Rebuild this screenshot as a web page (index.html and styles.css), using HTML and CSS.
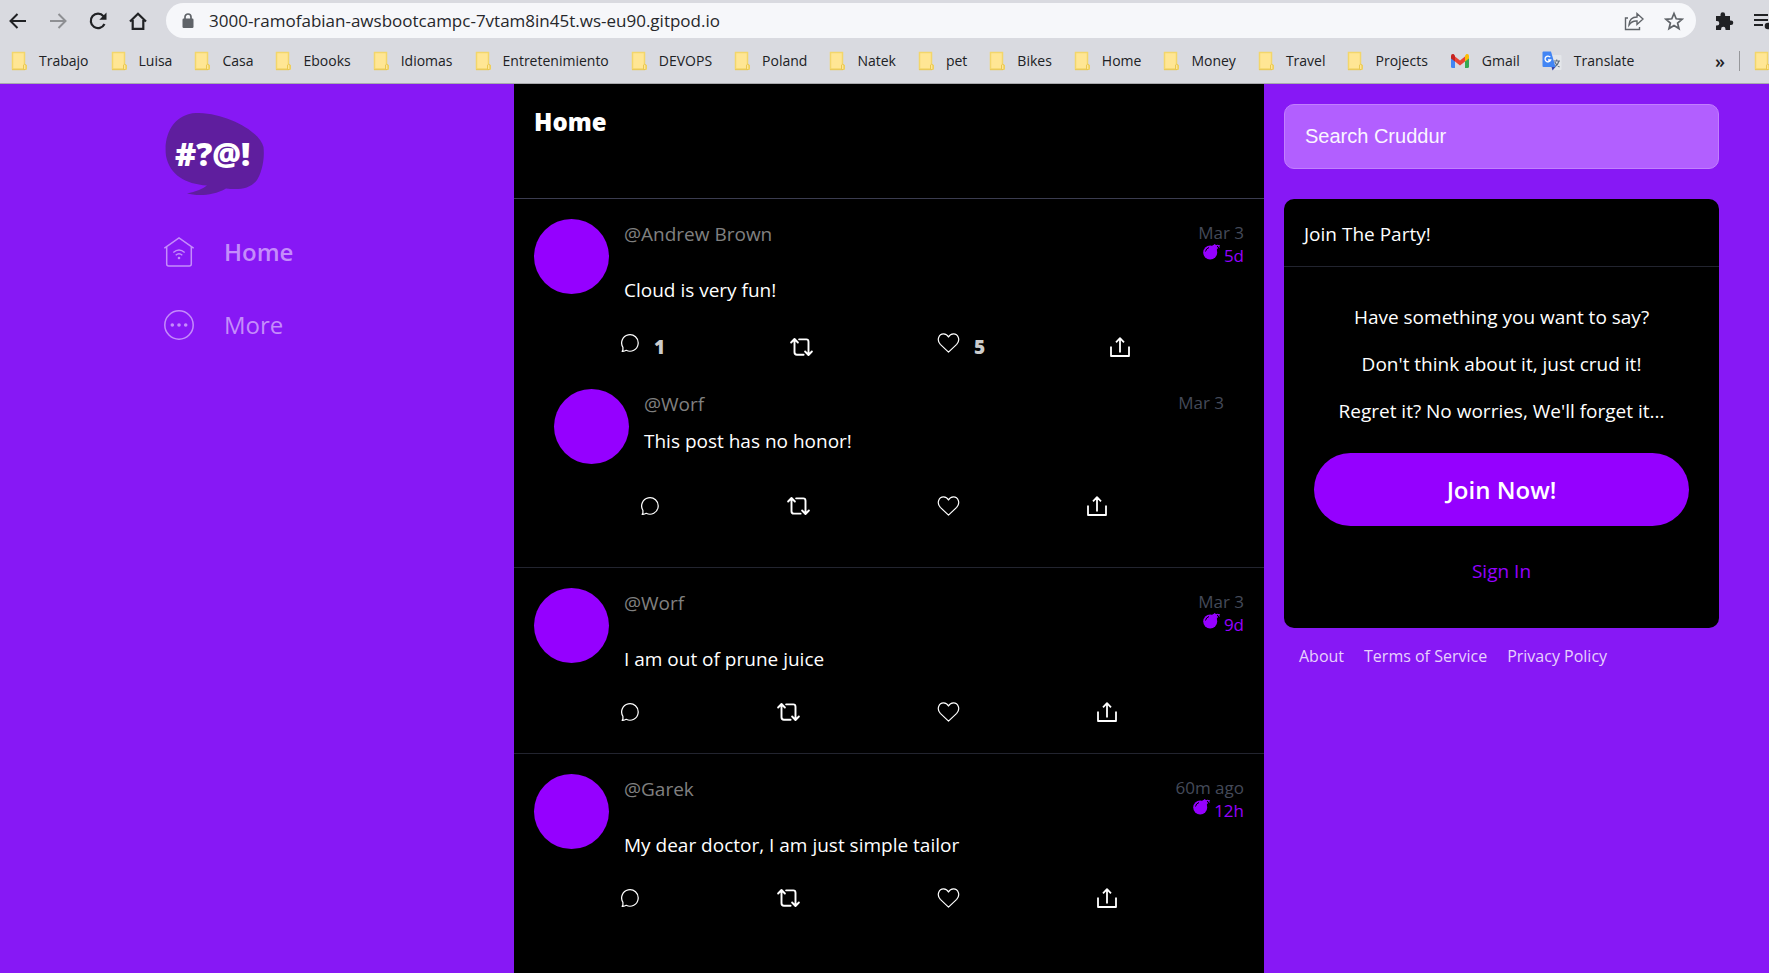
FILE: index.html
```html
<!DOCTYPE html>
<html lang="en">
<head>
<meta charset="utf-8">
<title>Cruddur</title>
<link rel="stylesheet" href="styles.css">
</head>
<body>
<svg class="sprite" aria-hidden="true">
  <symbol id="folder" viewBox="0 0 16 20"><path d="M1.5 1.5h12v13h2v3.500h-14z" fill="#ffe694" stroke="#f3d66b" stroke-width="1.500"/><path d="M12.500 18.500v-4.500q1-1.500 2.500 0v3.500q0 1-1 1z" fill="#ffe694" stroke="#e9c750"/><path d="M1 18.700h13" stroke="#e9c750"/></symbol>
  <symbol id="comment" viewBox="0 0 20 20"><path d="M1.200 18.700l.8-1.200V14.500A8.700 8.700 0 1 1 5.500 17.700q-2 1.300-4.300 1z" fill="none" stroke="currentColor" stroke-width="1.300" stroke-linejoin="round"/></symbol>
  <symbol id="repost" viewBox="0 0 24 20"><path d="M1.200 5.300L4.700 1.600l3.500 3.700M4.700 2v13.500q0 2.500 2.500 2.500h7M9.500 2H17q2.300 0 2.300 2.500V18M15.800 14.700l3.500 3.700 3.500-3.700" fill="none" stroke="currentColor" stroke-width="2" stroke-linecap="round" stroke-linejoin="round"/></symbol>
  <symbol id="heart" viewBox="0 0 24 22"><path d="M12 21L3 12.500C-1.500 7.500 1.500 1 6.500 1c2.500 0 4.500 1.500 5.500 3.500C13 2.500 15 1 17.500 1c5 0 8 6.500 3.500 11.500z" fill="none" stroke="currentColor" stroke-width="1.300" stroke-linejoin="round"/></symbol>
  <symbol id="share" viewBox="0 0 20 20"><path d="M1 9.500V19h18V9.500M10 15.500V1.500M6 5.300l4-4.100 4 4.100" fill="none" stroke="currentColor" stroke-width="1.800" stroke-linejoin="round"/></symbol>
  <symbol id="bomb" viewBox="0 0 18 16"><circle cx="7.200" cy="8.500" r="7" fill="currentColor"/><path d="M8 3l4-2.500 2.500 3.500-2.500 3zM12 2q2.500-1.500 5 0M15 1.500l1.500 2" fill="currentColor" stroke="currentColor"/><path d="M2.500 7.500q.5-3 3.500-4" fill="none" stroke="#000"/></symbol>
</svg>

<header class="browser">
  <div class="toolbar">
    <button class="tool" aria-label="Back"><svg viewBox="0 0 20 20"><path d="M18 10H3M9.500 3L2.500 10l7 7" fill="none" stroke="currentColor" stroke-width="2"/></svg></button>
    <button class="tool tool-off" aria-label="Forward"><svg viewBox="0 0 20 20"><path d="M2 10h15M10.500 3l7 7-7 7" fill="none" stroke="currentColor" stroke-width="2"/></svg></button>
    <button class="tool" aria-label="Reload"><svg viewBox="0 0 20 20"><path d="M16.500 13A7.200 7.200 0 1 1 15.500 5.200" fill="none" stroke="currentColor" stroke-width="2.200"/><path d="M18.500 1.500v7.200h-7.200z" fill="currentColor"/></svg></button>
    <button class="tool" aria-label="Home page"><svg viewBox="0 0 20 20"><path d="M2 10.500L10 2.700l8 7.800M4.700 9v8.800h10.600V9" fill="none" stroke="currentColor" stroke-width="2.200"/></svg></button>
    <div class="address">
      <svg class="lock" viewBox="0 0 12 16"><path d="M3 7V4a3 3 0 0 1 6 0v3" fill="none" stroke="#5f6368" stroke-width="1.700"/><rect x=".5" y="5.500" width="11" height="9.500" rx="1.200" fill="#5f6368"/></svg>
      <input class="url" aria-label="Address" value="3000-ramofabian-awsbootcampc-7vtam8in45t.ws-eu90.gitpod.io">
      <button class="tool tool-gray" aria-label="Share this page"><svg viewBox="0 0 20 20"><path d="M4 7H1.500v11.500h14V16M5 14q.5-8 8-8V2.500L19 8l-6 5.500V10q-5-.5-8 4z" fill="none" stroke="currentColor" stroke-width="1.400"/></svg></button>
      <button class="tool tool-gray" aria-label="Bookmark"><svg viewBox="0 0 20 20"><path d="M10 2.500l2.200 5.300 5.800.5-4.400 3.700 1.400 5.600-5-3-5 3L6.400 12 2 8.300l5.800-.5z" fill="none" stroke="currentColor" stroke-width="1.700"/></svg></button>
    </div>
    <button class="tool" aria-label="Extensions"><svg viewBox="0 0 20 20"><path d="M2 5h4.500V3.500a2.300 2.300 0 0 1 4.600 0V5H16v4.500h1a2.300 2.300 0 0 1 0 4.600h-1V19h-4.500v-1a2.200 2.200 0 0 0-4.400 0v1H2v-4.500h1a2.300 2.300 0 0 0 0-4.600H2z" fill="currentColor"/></svg></button>
    <button class="tool tool-edge" aria-label="Media"><svg viewBox="0 0 20 20"><path d="M0 4h14M0 9h14M0 14h9M17 4v11" stroke="currentColor" stroke-width="2.200"/><circle cx="14" cy="15" r="3.300" fill="currentColor"/></svg></button>
  </div>
  <nav class="bookmarks" aria-label="Bookmarks">
    <a href="#"><svg class="folder"><use href="#folder"/></svg>Trabajo</a>
    <a href="#"><svg class="folder"><use href="#folder"/></svg>Luisa</a>
    <a href="#"><svg class="folder"><use href="#folder"/></svg>Casa</a>
    <a href="#"><svg class="folder"><use href="#folder"/></svg>Ebooks</a>
    <a href="#"><svg class="folder"><use href="#folder"/></svg>Idiomas</a>
    <a href="#"><svg class="folder"><use href="#folder"/></svg>Entretenimiento</a>
    <a href="#"><svg class="folder"><use href="#folder"/></svg>DEVOPS</a>
    <a href="#"><svg class="folder"><use href="#folder"/></svg>Poland</a>
    <a href="#"><svg class="folder"><use href="#folder"/></svg>Natek</a>
    <a href="#"><svg class="folder"><use href="#folder"/></svg>pet</a>
    <a href="#"><svg class="folder"><use href="#folder"/></svg>Bikes</a>
    <a href="#"><svg class="folder"><use href="#folder"/></svg>Home</a>
    <a href="#"><svg class="folder"><use href="#folder"/></svg>Money</a>
    <a href="#"><svg class="folder"><use href="#folder"/></svg>Travel</a>
    <a href="#"><svg class="folder"><use href="#folder"/></svg>Projects</a>
    <a href="#"><svg class="site" viewBox="0 0 20 16"><path d="M1 3v10.500Q1 15 2.500 15H5V6z" fill="#4285f4"/><path d="M19 3v10.500Q19 15 17.500 15H15V6z" fill="#34a853"/><path d="M5 3.500l5 4 5-4v5l-5 4-5-4z" fill="#ea4335"/><path d="M1 3q0-2.500 2.500-2L5 2.500v6L1 5.500z" fill="#c5221f"/><path d="M19 3q0-2.500-2.500-2L15 2.500v6l4-3z" fill="#fbbc04"/></svg>Gmail</a>
    <a href="#"><svg class="site" viewBox="0 0 20 20"><path d="M8 4h10.500q1 0 1 1v13q0 1-1 1H11z" fill="#e4e6ea"/><path d="M11.500 10h6.500M14.700 8.500V10M17 10q-1 4-4.500 6M12.800 11q1.500 3.500 4.700 5" fill="none" stroke="#5f6f80" stroke-width="1.200"/><path d="M1.500.5H9l4.500 15.500h-12Q.5 16 .5 15V1.500q0-1 1-1z" fill="#4285f4"/><path d="M9.500 16h4l-3 3.500z" fill="#3949ab"/><path d="M8.300 6.200A2.900 2.900 0 1 0 8.700 9H6" fill="none" stroke="#fff" stroke-width="1.300"/></svg>Translate</a>
    <button class="more-marks" aria-label="More bookmarks">»</button>
    <a class="other" href="#" aria-label="Other bookmarks"><svg class="folder"><use href="#folder"/></svg></a>
  </nav>
</header>

<div class="app">
  <aside class="side">
    <nav class="menu">
      <svg class="logo" viewBox="0 0 99 83" role="img" aria-label="Cruddur"><path d="M34 0C64 1 95 19 98.500 34C100 48 96 61 92 67C85 76 74 77 61 75.500C48 83 32 83 22 80.500Q35 78 42 72.500C20 71 5 62 1 43C-2 18 12-1 34 0z" fill="#5f1e9e"/><text class="logo-text" x="10" y="53">#?@!</text></svg>
      <a class="menu-item menu-item-active" href="#"><svg viewBox="0 0 30 30"><path d="M.8 10.800L15 1l14.200 9.800M2.700 10v17q0 2 2 2h20.600q2 0 2-2V10" fill="none" stroke="currentColor" stroke-width="1.500" stroke-linecap="round"/><path d="M9.300 15.500q5.700-5 11.400 0M11.700 18.300q3.300-3 6.600 0" fill="none" stroke="currentColor" stroke-width="1.400"/><circle cx="15" cy="21" r="1.300" fill="currentColor"/></svg>Home</a>
      <a class="menu-item" href="#"><svg viewBox="0 0 30 30"><circle cx="15" cy="15" r="14.200" fill="none" stroke="currentColor" stroke-width="1.500"/><circle cx="8.300" cy="15" r="1.800" fill="currentColor"/><circle cx="15" cy="15" r="1.800" fill="currentColor"/><circle cx="21.700" cy="15" r="1.800" fill="currentColor"/></svg>More</a>
    </nav>
  </aside>

  <main class="feed">
    <h1 class="feed-title">Home</h1>

    <article class="post">
      <div class="post-head">
        <div class="avatar"></div>
        <div class="post-text"><a class="handle" href="#">@Andrew Brown</a><p class="message">Cloud is very fun!</p></div>
        <div class="times"><time>Mar 3</time><span class="expires"><svg><use href="#bomb"/></svg>5d</span></div>
      </div>
      <div class="actions">
        <button class="action" aria-label="Reply"><svg class="i-comment"><use href="#comment"/></svg><span class="count">1</span></button>
        <button class="action" aria-label="Repost"><svg class="i-repost"><use href="#repost"/></svg></button>
        <button class="action" aria-label="Like"><svg class="i-heart"><use href="#heart"/></svg><span class="count">5</span></button>
        <button class="action" aria-label="Share"><svg class="i-share"><use href="#share"/></svg></button>
      </div>
      <article class="reply">
        <div class="post-head">
          <div class="avatar"></div>
          <div class="post-text"><a class="handle" href="#">@Worf</a><p class="message">This post has no honor!</p></div>
          <div class="times"><time>Mar 3</time></div>
        </div>
        <div class="actions">
          <button class="action" aria-label="Reply"><svg class="i-comment"><use href="#comment"/></svg></button>
          <button class="action" aria-label="Repost"><svg class="i-repost"><use href="#repost"/></svg></button>
          <button class="action" aria-label="Like"><svg class="i-heart"><use href="#heart"/></svg></button>
          <button class="action" aria-label="Share"><svg class="i-share"><use href="#share"/></svg></button>
        </div>
      </article>
    </article>

    <article class="post">
      <div class="post-head">
        <div class="avatar"></div>
        <div class="post-text"><a class="handle" href="#">@Worf</a><p class="message">I am out of prune juice</p></div>
        <div class="times"><time>Mar 3</time><span class="expires"><svg><use href="#bomb"/></svg>9d</span></div>
      </div>
      <div class="actions">
        <button class="action" aria-label="Reply"><svg class="i-comment"><use href="#comment"/></svg></button>
        <button class="action" aria-label="Repost"><svg class="i-repost"><use href="#repost"/></svg></button>
        <button class="action" aria-label="Like"><svg class="i-heart"><use href="#heart"/></svg></button>
        <button class="action" aria-label="Share"><svg class="i-share"><use href="#share"/></svg></button>
      </div>
    </article>

    <article class="post">
      <div class="post-head">
        <div class="avatar"></div>
        <div class="post-text"><a class="handle" href="#">@Garek</a><p class="message">My dear doctor, I am just simple tailor</p></div>
        <div class="times"><time>60m ago</time><span class="expires"><svg><use href="#bomb"/></svg>12h</span></div>
      </div>
      <div class="actions">
        <button class="action" aria-label="Reply"><svg class="i-comment"><use href="#comment"/></svg></button>
        <button class="action" aria-label="Repost"><svg class="i-repost"><use href="#repost"/></svg></button>
        <button class="action" aria-label="Like"><svg class="i-heart"><use href="#heart"/></svg></button>
        <button class="action" aria-label="Share"><svg class="i-share"><use href="#share"/></svg></button>
      </div>
    </article>
  </main>

  <aside class="extras">
    <input class="search" type="text" aria-label="Search Cruddur" placeholder="Search Cruddur">
    <section class="join">
      <h2 class="join-title">Join The Party!</h2>
      <div class="join-body">
        <p>Have something you want to say?</p>
        <p>Don't think about it, just crud it!</p>
        <p>Regret it? No worries, We'll forget it...</p>
        <button class="join-button">Join Now!</button>
        <a class="sign-in" href="#">Sign In</a>
      </div>
    </section>
    <footer class="links"><a href="#">About</a><a href="#">Terms of Service</a><a href="#">Privacy Policy</a></footer>
  </aside>
</div>
</body>
</html>
```
FILE: styles.css
```css
* { box-sizing: border-box; }
html, body { height: 100%; }
body {
  display: flex;
  flex-direction: column;
  margin: 0;
  overflow: hidden;
  background: #8718f5;
  color: #fff;
  font-family: "Open Sans", "Noto Sans", sans-serif;
  font-size: 19px;
}
a { color: inherit; text-decoration: none; }
button { padding: 0; border: 0; background: none; color: inherit; font: inherit; }
p, h1, h2 { margin: 0; }
svg { display: block; flex: none; }
.sprite { position: absolute; width: 0; height: 0; }

/* Browser bar */
.browser { flex: none; background: #d9dae0; border-bottom: 1px solid #a9aaae; color: #202124; }
.toolbar { display: flex; align-items: center; gap: 20px; padding: 3px 0 0 8px; overflow: hidden; }
.tool { flex: none; color: #202124; }
.tool svg { width: 20px; height: 20px; }
.tool-off { color: #8e8f93; }
.tool-gray { color: #5f6368; }
.address {
  display: flex;
  flex: 1;
  align-items: center;
  gap: 20px;
  height: 35px;
  margin-left: -2px;
  margin-right: -2px;
  padding: 0 12px 0 16px;
  border-radius: 18px;
  background: #f6f7fa;
}
.lock { width: 12px; height: 16px; }
.url {
  flex: 1;
  min-width: 0;
  margin-left: -5px;
  padding: 0;
  border: 0;
  background: none;
  color: #26272b;
  font: 17px/24px "Open Sans", sans-serif;
}
.tool-edge { margin-right: -5px; }
.bookmarks {
  display: flex;
  align-items: center;
  gap: 22px;
  height: 45px;
  padding-left: 11px;
  overflow: hidden;
  font-size: 14px;
  line-height: 20px;
}
.bookmarks a { display: flex; flex: none; align-items: center; gap: 12px; }
.folder { width: 16px; height: 20px; }
.site { width: 20px; height: 20px; }
.more-marks { margin-left: auto; font-size: 18px; font-weight: 600; line-height: 20px; }
.bookmarks .other { width: 30px; margin-left: -8px; padding-left: 14px; border-left: 1px solid #96979b; }

/* Page */
.app { display: grid; flex: 1; grid-template-columns: minmax(0, 514fr) 750px minmax(0, 505fr); min-height: 0; }
.side { display: flex; justify-content: flex-end; padding-top: 29px; }
.menu { width: 350px; }
.logo { width: 99px; height: 83px; margin: 0 0 19px 1px; }
.logo-text { fill: #fff; font: 800 32px "Open Sans", sans-serif; }
.menu-item {
  display: flex;
  align-items: center;
  gap: 30px;
  height: 73px;
  color: #c58cfb;
  font-size: 24px;
  line-height: 32px;
}
.menu-item svg { width: 30px; height: 30px; }
.menu-item-active { font-weight: 600; }

/* Feed */
.feed { overflow: hidden; background: #000; }
.feed-title {
  height: 115px;
  padding: 22px 20px;
  border-bottom: 1px solid #3b3c50;
  font-size: 24px;
  font-weight: 800;
  line-height: 32px;
}
.post { padding: 20px 20px 21px; border-bottom: 1px solid #22242f; }
.post:last-child { border-bottom: 0; }
.post-head { display: flex; align-items: flex-start; gap: 15px; }
.avatar { flex: none; width: 75px; height: 75px; border-radius: 50%; background: #9500ff; }
.post-text { flex: 1; }
.handle { display: block; color: #808080; line-height: 30px; }
.message { margin: 28px 0 20px; line-height: 26px; }
.times { padding-top: 2px; color: #444a59; font-size: 17px; line-height: 23px; text-align: right; }
.times time { display: block; }
.expires { display: flex; justify-content: flex-end; gap: 3px; color: #9500ff; }
.expires svg { width: 18px; height: 16px; }
.actions { display: flex; align-items: center; padding-left: 77px; }
.action { display: flex; flex: 1 1 auto; align-items: flex-start; gap: 14px; padding: 10px; color: #fff; }
.action svg { height: 20px; }
.i-comment { width: 19px; }
.i-repost, .i-heart { width: 23px; }
.i-share { width: 20px; }
.count { color: #ccc; font-size: 19px; font-weight: 800; line-height: 28px; }
.reply { padding: 18px 20px 20px; }
.reply .message { margin: 9px 0 32px; }

/* Right column */
.extras { padding: 20px 50px 20px 20px; }
.search {
  display: block;
  width: 100%;
  height: 65px;
  padding: 0 20px;
  border: 1px solid #c27ffd;
  border-radius: 10px;
  background: #b25fff;
  color: #fff;
  font: 20px "Liberation Sans", sans-serif;
}
.search::placeholder { color: #fbf5ff; opacity: 1; }
.join { margin-top: 30px; border-radius: 10px; background: #000; }
.join-title { padding: 22px 20px 18px; border-bottom: 1px solid #22242f; font-size: 19px; font-weight: 400; line-height: 27px; }
.join-body { display: flex; flex-direction: column; align-items: center; gap: 20px; padding: 37px 30px 43px; line-height: 27px; }
.join-button {
  align-self: stretch;
  margin: 8px 0;
  padding: 20px;
  border-radius: 37px;
  background: #9500ff;
  color: #fff;
  font-size: 24px;
  font-weight: 600;
  line-height: 33px;
}
.sign-in { margin-top: 4px; color: #9500ff; }
.links { display: flex; gap: 20px; padding: 16px 15px; color: #e7d1fd; font-size: 16px; line-height: 24px; }
```
